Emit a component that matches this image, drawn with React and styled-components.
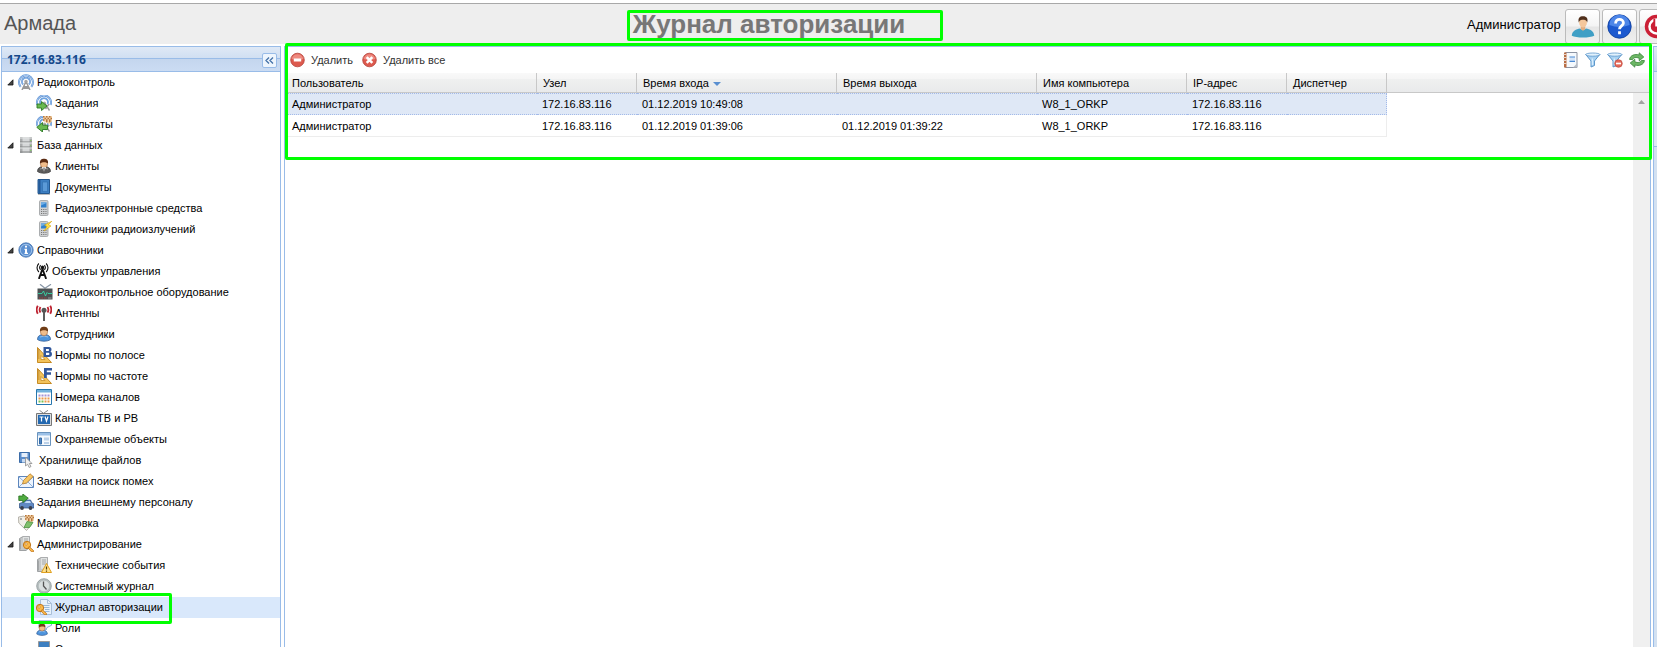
import React, { useState } from "react";
import styled, { createGlobalStyle, css } from "styled-components";

const GlobalStyle = createGlobalStyle`
  * { box-sizing: border-box; }
  html, body { margin: 0; padding: 0; }
  body {
    background: #fff;
    color: #000;
    font: 11px/20px "Liberation Sans", Arial, sans-serif;
    overflow: hidden;
  }
  button { font: inherit; color: inherit; padding: 0; border: 0; background: none; cursor: pointer; }
`;

const blue = "#99bce8";

/* ---------- layout ---------- */

const Page = styled.div`
  display: flex;
  flex-direction: column;
  height: 100vh;
  padding-top: 3px;
  overflow: hidden;
`;

const Header = styled.header`
  display: flex;
  align-items: center;
  flex: none;
  height: 41px;
  border-top: 1px solid #a8a8a8;
  background: #eee;
`;

const Brand = styled.div`
  flex: none;
  width: 73px;
  padding-left: 4px;
  padding-bottom: 2px;
  color: #555;
  font-size: 20px;
  white-space: nowrap;
`;

const TitleArea = styled.div`
  flex: 1;
  display: flex;
  justify-content: center;
`;

const Title = styled.h1`
  position: relative;
  margin: 0;
  color: #777;
  font-size: 26px;
  line-height: 30px;
  white-space: nowrap;
`;

const UserArea = styled.div`
  flex: none;
  display: flex;
  align-items: center;
  gap: 2px;
  width: 192px;
  align-self: stretch;
  padding-top: 5px;
  overflow: hidden;
`;

const UserName = styled.span`
  flex: none;
  width: 98px;
  padding: 0 0 4px 2px;
  font-size: 13px;
`;

const HeaderButton = styled.button`
  flex: none;
  display: grid;
  place-items: center;
  width: 35px;
  height: 35px;
  border: 1px solid #bbb;
  border-radius: 3px;
  background: linear-gradient(#fff, #f4f4f4 48%, #e6e6e6 52%, #efefef);
`;

const Workspace = styled.div`
  flex: 1;
  min-height: 0;
  display: flex;
  gap: 3px;
  padding: 2px 0 0 1px;
`;

const Sidebar = styled.nav`
  flex: none;
  width: 280px;
  border: 1px solid ${blue};
  border-bottom: 0;
`;

const SidebarHead = styled.div`
  display: flex;
  align-items: center;
  justify-content: space-between;
  height: 25px;
  padding: 2px 3px 0 5px;
  border-bottom: 1px solid ${blue};
  background: linear-gradient(#dfe9f6, #d0dff2 46%, ${blue} 46%, ${blue} 50%, #c4d6ee 50%, #cbdcf3);
  color: #15498b;
  font: bold 12px/22px "Noto Sans", sans-serif;
`;

const CollapseButton = styled.button`
  display: grid;
  place-items: center;
  width: 15px;
  height: 15px;
  border: 1px solid ${blue};
  border-radius: 2px;
  background: #eef5fd;
`;

const Main = styled.main`
  position: relative;
  flex: 1;
  min-width: 0;
  display: flex;
  flex-direction: column;
  border: 1px solid ${blue};
  border-bottom: 0;
`;

const EastPanel = styled.aside`
  flex: none;
  width: 4px;
  margin-left: -1px;
  border: 1px solid ${blue};
  border-width: 1px 0 0 1px;
  background: #d3e1f1;
`;

const EastSection = styled.div`
  height: ${(p) => p.$height}px;
  border-bottom: 1px solid ${blue};
  background: ${(p) => p.$fill};
`;

/* ---------- green call-outs ---------- */

const Callout = styled.span`
  position: absolute;
  z-index: 2;
  border: 3px solid #00ff00;
  border-radius: 2px;
  pointer-events: none;
  ${(p) => p.$area === "title" && css`inset: 1px -38px -2px -6px;`}
  ${(p) => p.$area === "grid" && css`top: -4px; left: 0; right: -2px; height: 117px;`}
  ${(p) => p.$area === "row" && css`top: -4px; left: 29px; width: 141px; height: 31px;`}
`;

/* ---------- tree ---------- */

const Tree = styled.ul`
  margin: 0;
  padding: 0;
  list-style: none;
`;

const Row = styled.li`
  position: relative;
  display: flex;
  align-items: flex-start;
  height: 21px;
  padding-left: ${(p) => (p.$level === 2 ? 34 : 0)}px;
  background: ${(p) => (p.$selected ? "#d9e8fb" : "transparent")};
`;

const Toggle = styled.button`
  flex: none;
  display: grid;
  place-items: center;
  width: 16px;
  height: 21px;
`;

const Spacer = styled.span`
  flex: none;
  width: 16px;
`;

const RowLink = styled.a`
  display: flex;
  align-items: center;
  gap: 3px;
  color: #000;
  text-decoration: none;
  white-space: nowrap;
`;

/* ---------- grid ---------- */

const Toolbar = styled.div`
  display: flex;
  align-items: center;
  justify-content: space-between;
  flex: none;
  height: 26px;
  padding: 0 5px;
`;

const ToolGroup = styled.div`
  display: flex;
  align-items: center;
  gap: ${(p) => p.$gap}px;
`;

const ToolButton = styled.button`
  display: flex;
  align-items: center;
  gap: 5px;
  color: #333;
`;

const Viewport = styled.div`
  flex: 1;
  min-height: 0;
  display: flex;
  align-items: stretch;
`;

const TableArea = styled.div`
  flex: 1;
  min-width: 0;
  overflow: hidden;
`;

const headFill = css`
  height: 20px;
  border-bottom: 1px solid #c8c8c8;
  background: linear-gradient(#f9f9f9, #f5f5f5 30%, #eff0f0 32%, #e9eaeb);
`;

const Table = styled.table`
  width: 100%;
  padding-left: 2px;
  table-layout: fixed;
  border-collapse: separate;
  border-spacing: 0;
`;

const HeadCell = styled.th`
  ${headFill}
  padding: 1px 6px 0;
  border-right: ${(p) => (p.$filler ? 0 : "1px solid #c8c8c8")};
  font-weight: normal;
  line-height: 18px;
  text-align: left;
  white-space: nowrap;
  &:first-child { padding-left: 5px; }
`;

const SortArrow = styled.svg`
  margin-left: 4px;
  vertical-align: middle;
`;

const Cell = styled.td`
  height: 22px;
  padding: 0 5px;
  line-height: 20px;
  border-bottom: 1px solid #ededed;
  white-space: nowrap;
  &:last-child { border-right: 1px solid #ededed; }
  ${(p) =>
    p.$selected &&
    css`
      border-top: 1px dotted #a3bae9;
      border-bottom: 1px dotted #a3bae9;
      background: #dfe8f6;
      &:last-child { border-right: 1px dotted #a3bae9; }
    `}
`;

const ScrollColumn = styled.div`
  flex: none;
  display: flex;
  flex-direction: column;
  width: 17px;
`;

const ScrollCap = styled.div`
  ${headFill}
`;

const ScrollTrack = styled.div`
  flex: 1;
  display: flex;
  justify-content: center;
  padding-top: 7px;
  background: #f0f0f0;
`;

/* ---------- icons ---------- */

const Radio = () => (
  <g fill="none">
    <path d="M2.700 12.800A7 7 0 1 1 13.300 12.800" stroke="#5b8fd2" strokeWidth="2" />
    <path d="M2.700 12.800A7 7 0 1 1 13.300 12.800" stroke="#b4d2f5" strokeWidth=".9" />
    <path d="M5 10.300A4 4 0 1 1 11 10.300" stroke="#5b8fd2" strokeWidth="1.800" />
    <path d="M5 10.300A4 4 0 1 1 11 10.300" stroke="#9cc4f0" strokeWidth=".7" />
    <circle cx="8" cy="7.500" r="1.700" fill="#a5a5a5" />
    <path d="M7.500 8.500 4 16M8.500 8.500l3.500 7.500M6 12.500l4.500 2M10 12.500l-4.500 2" stroke="#999" strokeWidth="1.500" />
  </g>
);
const Dish = () => (
  <g fill="none">
    <path d="M1.500 10A7 7 0 1 1 14.500 10" stroke="#5b8fd2" strokeWidth="2" />
    <path d="M1.500 10A7 7 0 1 1 14.500 10" stroke="#b4d2f5" strokeWidth=".9" />
    <path d="M4.500 9A4 4 0 1 1 11.500 9" stroke="#6fa4e0" strokeWidth="1.800" />
    <circle cx="8.500" cy="8" r="1.500" fill="#aaa" />
    <path d="m9 8.500 4.500 7M13 9l-3.500 5" stroke="#999" strokeWidth="1.400" />
  </g>
);
const Rack = () => (
  <g>
    <path d="M2 0h12v16H2z" fill="#a9abac" />
    <path d="M4.500 0h7v16h-7z" fill="#d5d7d8" />
    <path d="M2 5h12M2 10h12M2 15h12" stroke="#808384" />
    <path d="M2 1h12M2 6h12M2 11h12" stroke="#e3e5e5" />
    <path d="M12 3.500h1.500M12 8.500h1.500M12 13.500h1.500" stroke="#85c36c" />
  </g>
);
const Tower = () => (
  <g>
    <path d="M1.500 2.500 5 .5h6.500v11L8 14.500H1.500z" fill="#c6c8c9" stroke="#8d9092" strokeWidth=".8" />
    <path d="M5 .8h6.200v11H5z" fill="#e0e2e2" />
    <path d="M6 3h4M6 5h4M6 7h4" stroke="#a3a6a7" />
    <path d="M2.500 3.500v10" stroke="#a3a6a7" />
  </g>
);
const Person = ({ hair = "#703d17", body = "#4d94dd", edge = "#28518a" }) => (
  <g>
    <path d="M1.500 13.500c0-3.600 2.500-5 6.500-5s6.500 1.400 6.500 5c-3 2.300-10 2.300-13 0z" fill={body} stroke={edge} strokeWidth=".7" />
    <path d="M4 11q4-2 8 0" fill="none" stroke="#fff" strokeOpacity=".4" />
    <ellipse cx="8" cy="5.800" rx="3.600" ry="4" fill="#f0bd8b" stroke="#9e633a" strokeWidth=".6" />
    <path d="M4 5.600C3.600 1.800 5.500.7 8 .7s4.600 1.300 4 4.900C10.800 4 6.500 3.500 4 5.600z" fill={hair} />
  </g>
);
const Phone = () => (
  <g>
    <rect x="3.500" y=".5" width="8.500" height="15" rx="1.200" fill="#d0d2d4" stroke="#9a9da0" strokeWidth=".8" />
    <path d="M5 2.500h5.500v5H5z" fill="#2f80cd" />
    <path d="M5 5.500 10.500 3V2.500H5z" fill="#6eaee6" />
    <path d="M5 9.500h5.500M5 11.500h5.500M5 13.500h5.500" stroke="#777" strokeDasharray="1.200 1" />
  </g>
);
const Ruler = ({ letter }) => (
  <g>
    <path d="M1.500.500v15H15.500z" fill="#f2c25b" stroke="#c78b23" />
    <path d="M5 8.500v4h4z" fill="#fff" stroke="#c78b23" strokeWidth=".8" />
    <path d="M2 3h1.500M2 5h1.500M2 7h1.500M2 9h1.500M2 11h1.500" stroke="#9b6514" strokeWidth=".7" />
    {letter === "B" ? (
      <path d="M7.500 0H13q2.500 0 2.500 2.500 0 1.300-1 2 1.500.6 1.500 2.500 0 3-3 3H7.500zm2.500 2v2h2.200q.9 0 .9-1t-.9-1zm0 3.800V8h2.400q1 0 1-1.100t-1-1.100z" fill="#31579c" fillRule="evenodd" />
    ) : (
      <path d="M8 0h8v2.500H10.800v1.700H15v2.500h-4.200V10H8z" fill="#31579c" />
    )}
  </g>
);
const Arrow = ({ back }) => (
  <path
    d={back ? "M6.500 6.500v2.700h5v4.300h-5V16L.8 11.300z" : "M1 9h4.500V6.500L11 11 5.500 15.500V13H1z"}
    fill="#6ab950"
    stroke="#2b7a25"
    strokeWidth=".9"
  />
);
const Key = () => (
  <g>
    <circle cx="4.500" cy="9" r="3.700" fill="#fbb94a" stroke="#bb6f14" strokeWidth=".9" />
    <path d="m6.500 10.500 4.500 4v1.300H9L5.500 12z" fill="#fbb94a" stroke="#bb6f14" strokeWidth=".8" />
    <circle cx="3.600" cy="8" r="1.100" fill="#fff" stroke="#bb6f14" strokeWidth=".6" />
  </g>
);
const Checker = () => (
  <g>
    <path d="M7 0h9v5.500l-3 2.500-6-3z" fill="#f3d2a6" />
    <path d="M7 .8h9M8.500 2.400h7.500M7 4h9M10 5.600h5" stroke="#b4733b" strokeDasharray="1.500 1.500" strokeWidth="1.500" />
  </g>
);
const Red = ({ children }) => (
  <g>
    <circle cx="7.500" cy="8" r="6.800" fill="#dd5a4e" stroke="#b5433b" strokeWidth=".8" />
    <path d="M1.700 7A5.900 5.900 0 0 1 13.300 7Q7.500 9 1.700 7z" fill="#ee8a80" />
    {children}
  </g>
);
const Funnel = () => (
  <g>
    <path d="M.8 2.500 6 9v6l3.500-1.500V9l5.200-6.500z" fill="#a9d2f2" stroke="#5d97cb" />
    <ellipse cx="7.800" cy="2.600" rx="7.200" ry="1.600" fill="#e1f1fc" stroke="#5d97cb" strokeWidth=".8" />
    <path d="M7.300 6.500v6.500" stroke="#e6f5ff" />
  </g>
);

const drawings = {
  radio: <Radio />,
  task: <><Dish /><Arrow /></>,
  result: <><Dish /><Checker /><Arrow back /></>,
  database: <Rack />,
  client: (
    <>
      <Person hair="#5b2c13" body="#5c5c5c" edge="#333" />
      <path d="m6 9 2 5.500L10 9z" fill="#fff" />
      <path d="M8 9.500v4.500" stroke="#333" />
    </>
  ),
  book: (
    <>
      <path d="M2 .5h11.500v14H2z" fill="#3d7fc2" stroke="#24588f" />
      <path d="M2.500 1h2v13h-2z" fill="#245b98" />
      <path d="M6.500 3h5v9.500h-5z" fill="#5b9ad7" stroke="#2e6bab" strokeWidth=".6" />
      <path d="M2 15.500h12" stroke="#bbb" />
    </>
  ),
  phone: <Phone />,
  source: <><Phone /><path d="M15.800.2 8.500 4l2.500 1.500-3 4.500 7-5-2.500-1.300z" fill="#ffe14a" stroke="#d3a310" strokeWidth=".6" /></>,
  info: (
    <>
      <circle cx="8" cy="8" r="7.200" fill="#5b8fd0" stroke="#4573af" strokeWidth=".8" />
      <circle cx="8" cy="8" r="5.700" fill="none" stroke="#b3d0f0" strokeWidth=".8" />
      <path d="M7 3.700h2v1.800H7zM6.500 6.800H9v4h1V12H6.500v-1.200H7V8h-.5z" fill="#fff" />
    </>
  ),
  tower: (
    <g fill="none" stroke="#111" strokeWidth="1.400">
      <path d="M3.500.5Q-1 4.500 3.500 9M12.500.5q4.500 4 0 8.500M5.700 2.200q-2.500 2.300 0 4.600M10.300 2.200q2.500 2.300 0 4.600" />
      <circle cx="8" cy="4.500" r="1.300" fill="#111" />
      <path d="M3.500 16 7.500 7h1l4 9M5.500 12h5" strokeWidth="2.200" />
    </g>
  ),
  monitor: (
    <>
      <path d="m3 .3 5 4 6-4" fill="none" stroke="#8896a6" strokeWidth="1.300" />
      <path d="M.5 4.500h15v11H.5z" fill="#4b5153" />
      <path d="M1 9.500h4l1.500-2.500L8.500 12l1.500-3.500 1 1h4.500" fill="none" stroke="#38d5a5" strokeWidth=".9" />
      <path d="M2 14h8" stroke="#b23c38" strokeDasharray="1.500 1" />
      <path d="M11 14h3.500" stroke="#999" />
    </>
  ),
  antenna: (
    <g fill="none">
      <path d="M1.800.800q-2.300 4 0 8M4.500 2q-1.800 2.800 0 5.600M14.200.8q2.300 4 0 8M11.500 2q1.800 2.800 0 5.600" stroke="#bd2331" strokeWidth="1.800" />
      <circle cx="8" cy="5.200" r="2.500" fill="#555" />
      <path d="M8 5v11" stroke="#555" strokeWidth="1.900" />
    </g>
  ),
  employee: <Person />,
  normB: <Ruler letter="B" />,
  normF: <Ruler letter="F" />,
  channels: (
    <>
      <path d="M.5.500h15v15H.5z" fill="#fff" stroke="#2777ae" />
      <path d="M1 1h14v2.500H1z" fill="#72b1dc" />
      <path d="M2.500 6.500h11.500" stroke="#a593d6" strokeWidth="2" strokeDasharray="2 1" />
      <path d="M2.500 9.500h11.500" stroke="#eb9a4b" strokeWidth="2" strokeDasharray="2 1" />
      <path d="M2.500 12.500h6" stroke="#7bc153" strokeWidth="2" strokeDasharray="2 1" />
      <path d="M8.500 12.500h5.500" stroke="#eb9a4b" strokeWidth="2" strokeDasharray="2 1" />
    </>
  ),
  tv: (
    <>
      <path d="m3.500.3 4 3 4.500-3" fill="none" stroke="#888" />
      <path d="M.5 3.500h15v12H.5z" fill="#ddd" stroke="#777" />
      <path d="M2 5h12v9H2z" fill="#2368b0" />
      <path d="M3.500 7h4M5.500 7v4.500M9 6.500l1.500 4.500L12 6.500" fill="none" stroke="#fff" strokeWidth="1.200" />
    </>
  ),
  protect: (
    <>
      <path d="M1.500 1.500h13v13h-13z" fill="#f5f9fd" stroke="#6993bd" />
      <path d="M2 2h12v2.500H2z" fill="#9cc1e7" />
      <path d="M3.500 7h2v6h-2z" fill="#4f86c3" stroke="#356ba6" />
      <path d="M8 6.500h5v3H8zM8 11h5v2H8z" fill="#bcd1e8" />
    </>
  ),
  storage: (
    <>
      <path d="M.5.500h10v10H.5z" fill="#5b8dcb" stroke="#3b6ca8" />
      <path d="M2.500 1h6v4h-6z" fill="#e4eefb" />
      <path d="M3 7h5v3.500H3z" fill="#c7daf2" />
      <path d="m6.500 5 6.500 6.500h-2.700l1.700 3-1.800 1-1.600-3.200-2.100 1.700z" fill="#f1f1f1" stroke="#8b8b8b" strokeWidth=".8" />
    </>
  ),
  request: (
    <>
      <path d="M.5 3.500h15v11H.5z" fill="#edf4fd" stroke="#5d86bd" />
      <path d="m1 4 7 6.500L15 4M1 14l5-5M15 14l-5-5" fill="none" stroke="#8cafd9" />
      <path d="m4.500 11 1-3.500L12 .8l3.200 2.700L8.500 10z" fill="#f7c563" stroke="#b57b28" strokeWidth=".8" />
    </>
  ),
  car: (
    <>
      <path d="M1.500 13V9.500l4-1.500L8 6h4.500l1.500 3 2 1v4H1.500z" fill="#6189c3" stroke="#2b4e80" strokeWidth=".7" />
      <path d="M8.500 7h3.500l1 2H6.500z" fill="#c3dcf6" />
      <circle cx="4" cy="14" r="1.900" fill="#3a3f4c" />
      <circle cx="12.500" cy="14" r="1.900" fill="#3a3f4c" />
      <path d="M.8 2h4V0l5.500 4.200L4.800 8.500V6.500h-4z" fill="#4fac40" stroke="#246e1c" strokeWidth=".8" />
    </>
  ),
  mark: (
    <>
      <path d="M.5 2 6 1l7.500 8.500-5 6L.8 8z" fill="#f0eee7" stroke="#b5b2aa" />
      <circle cx="3" cy="4" r="1" fill="#999" />
      <Checker />
      <path d="m6 12.500 3-6 6 1-3.500 5z" fill="#7fbf6c" stroke="#3f8a35" strokeWidth=".7" />
    </>
  ),
  admin: <><Tower /><g transform="translate(4.500 0)"><Key /></g></>,
  events: (
    <>
      <Tower />
      <path d="m10.500 6.500 5 9h-10z" fill="#ffe08a" stroke="#e0a020" strokeLinejoin="round" />
      <path d="M10.500 9.500v3M10.500 13.500v1.200" stroke="#543a00" strokeWidth="1.200" />
    </>
  ),
  clock: (
    <>
      <circle cx="8" cy="8" r="7.300" fill="#b9c1c2" stroke="#8d9799" strokeWidth=".8" />
      <circle cx="8" cy="8" r="5.700" fill="#d9dfdf" stroke="#aab1b2" strokeWidth=".6" />
      <path d="M7.500 3.500V8l3 3.500" fill="none" stroke="#555" strokeWidth="1.300" />
    </>
  ),
  authlog: (
    <>
      <path d="M4.500.500h7l4 4v11h-11z" fill="#e7f1fb" stroke="#a9bfd8" />
      <path d="M11.500.500v4h4" fill="none" stroke="#a9bfd8" />
      <path d="M7 6.500h6.500M7 8.500h6.500M9 10.500h4.500M9 12.500h4.500" stroke="#9bbad9" />
      <g transform="translate(-.5 0)"><Key /></g>
    </>
  ),
  roles: (
    <>
      <path d="M3 .8h12.500v4.500L11 7.500 10 10 8.500 7.500 3 6z" fill="#eef5fd" stroke="#7da3d0" strokeWidth=".9" />
      <g transform="translate(-.5 3) scale(.82)"><Person /></g>
    </>
  ),
  session: (
    <>
      <path d="M2.500.500h11v9.500h-11z" fill="#3d7fc0" stroke="#999" />
      <path d="M7 10.500h2v3H7zM4 14h8" stroke="#888" />
    </>
  ),
  remove: <Red><path d="M3.800 6.500h7.400v3H3.800z" fill="#fff" /></Red>,
  removeAll: <Red><path d="m4.700 5.200 5.600 5.600M10.300 5.200 4.700 10.800" stroke="#fff" strokeWidth="2.600" /></Red>,
  notes: (
    <>
      <path d="M2.500.500h11.500v15H2.500z" fill="#f5f9fd" stroke="#8c93a3" />
      <path d="M1 .500h2.500v15H1z" fill="#b96d44" />
      <path d="M.5 2.500h3M.5 5.500h3M.5 8.500h3M.5 11.500h3" stroke="#e7d5ca" />
      <path d="M6.500 5h5.500v4.500H6.500z" fill="#d6e6f9" />
      <path d="M6.500 5h5.500M6.500 9.300h5.500" stroke="#4c8bd5" strokeWidth="1.200" />
      <path d="M14 11.500v4h-4z" fill="#b6bcc5" />
    </>
  ),
  filter: <Funnel />,
  filterOff: (
    <>
      <Funnel />
      <circle cx="11.500" cy="11.500" r="3.800" fill="#e3685a" stroke="#bf4b40" strokeWidth=".7" />
      <path d="M9 11.500h5" stroke="#fff" strokeWidth="1.700" />
    </>
  ),
  refresh: (
    <g fill="#6db765" stroke="#3a853b" strokeWidth=".8" strokeLinejoin="round">
      <path d="M.6 7.500C.8 3.500 6 1.500 10.200 3V.8L14.800 5 10.200 8.700V6.200C7 4.800 4.500 5.500 3.600 7.500z" />
      <path d="M15.400 8.500c-.2 4-5.400 6-9.600 4.500v2.200L1.200 11l4.600-3.700v2.500c3.200 1.400 5.700.7 6.600-1.300z" />
    </g>
  ),
  user: (
    <>
      <path d="M.5 13.800C.8 10.500 3.500 9.500 6 9l2 1.200L10 9c2.500.5 5.200 1.500 5.500 4.800-3 1.600-12 1.600-15 0z" fill="#3f9fc5" />
      <path d="M6.500 7.500h3v2L8 10.500l-1.500-1z" fill="#e2ae80" />
      <ellipse cx="8" cy="5" rx="2.600" ry="3.400" fill="#f4c79c" />
      <path d="M5.200 5C4.500 1.800 5.800.9 8 .8s3.600 1.300 2.800 4.200C10.300 3.400 9.500 3 8 3.200 6.500 3 5.700 3.400 5.200 5z" fill="#50301c" />
    </>
  ),
  help: (
    <>
      <circle cx="8" cy="8" r="7.500" fill="#1c59cf" stroke="#0c3b98" strokeWidth=".5" />
      <path d="M1.500 7a6.500 6.500 0 0 1 13 0Q8 9.500 1.500 7z" fill="#4d86e8" />
      <path d="M5.500 6C5.500 2.500 10.500 2.700 10.500 5.700 10.500 7.500 8 7.700 8 9.700M8 11v2" fill="none" stroke="#fff" strokeWidth="1.800" />
    </>
  ),
  exit: (
    <>
      <circle cx="8" cy="8" r="7.500" fill="#cb1f35" />
      <circle cx="8" cy="8" r="4.500" fill="none" stroke="#fff" strokeWidth="1.600" />
      <path d="M8 3v5" stroke="#cb1f35" strokeWidth="4" />
      <path d="M8 3v5" stroke="#fff" strokeWidth="1.600" />
    </>
  ),
};

const IconSvg = styled.svg`
  flex: none;
  display: block;
`;

const Icon = ({ name, width = 16, size = 16 }) => (
  <IconSvg width={size === 16 ? width : size} height={size} viewBox="0 0 16 16" preserveAspectRatio={width < 16 ? "none" : "xMidYMid meet"} aria-hidden="true">
    {drawings[name]}
  </IconSvg>
);

/* ---------- data ---------- */

const groups = [
  { label: "Радиоконтроль", icon: "radio", items: [["Задания", "task"], ["Результаты", "result"]] },
  {
    label: "База данных",
    icon: "database",
    items: [["Клиенты", "client"], ["Документы", "book"], ["Радиоэлектронные средства", "phone"], ["Источники радиоизлучений", "source"]],
  },
  {
    label: "Справочники",
    icon: "info",
    items: [
      ["Объекты управления", "tower", 13],
      ["Радиоконтрольное оборудование", "monitor", 18],
      ["Антенны", "antenna"],
      ["Сотрудники", "employee"],
      ["Нормы по полосе", "normB"],
      ["Нормы по частоте", "normF"],
      ["Номера каналов", "channels"],
      ["Каналы ТВ и РВ", "tv"],
      ["Охраняемые объекты", "protect"],
    ],
  },
  { label: "Хранилище файлов", icon: "storage", width: 18 },
  { label: "Заявки на поиск помех", icon: "request" },
  { label: "Задания внешнему персоналу", icon: "car" },
  { label: "Маркировка", icon: "mark" },
  {
    label: "Администрирование",
    icon: "admin",
    items: [
      ["Технические события", "events"],
      ["Системный журнал", "clock"],
      ["Журнал авторизации", "authlog"],
      ["Роли", "roles"],
      ["Сессии", "session"],
    ],
  },
];

const columns = [
  ["Пользователь", 250],
  ["Узел", 100],
  ["Время входа", 200, true],
  ["Время выхода", 200],
  ["Имя компьютера", 150],
  ["IP-адрес", 100],
  ["Диспетчер", 100],
];

const records = [
  ["Администратор", "172.16.83.116", "01.12.2019 10:49:08", "", "W8_1_ORKP", "172.16.83.116", ""],
  ["Администратор", "172.16.83.116", "01.12.2019 01:39:06", "01.12.2019 01:39:22", "W8_1_ORKP", "172.16.83.116", ""],
];

const current = "Журнал авторизации";

function TreeItem({ label, icon, width, level, children }) {
  const selected = label === current;
  return (
    <Row $level={level} $selected={selected}>
      {children}
      <RowLink href="#" aria-current={selected ? "page" : undefined}>
        <Icon name={icon} width={width} />
        {label}
      </RowLink>
      {selected && <Callout $area="row" />}
    </Row>
  );
}

function TreeGroup({ group }) {
  const [open, setOpen] = useState(true);
  return (
    <>
      <TreeItem {...group} level={1}>
        {group.items ? (
          <Toggle aria-label={group.label} aria-expanded={open} onClick={() => setOpen(!open)}>
            <svg width="7" height="7" viewBox="0 0 7 7" aria-hidden="true">
              <path d={open ? "M6 .8V6H.8z" : "M1 0v7l4-3.500z"} fill="#444" stroke="#111" strokeWidth=".8" />
            </svg>
          </Toggle>
        ) : (
          <Spacer />
        )}
      </TreeItem>
      {open &&
        group.items?.map(([label, icon, width]) => (
          <TreeItem key={label} label={label} icon={icon} width={width} level={2} />
        ))}
    </>
  );
}

export default function App() {
  return (
    <Page>
      <GlobalStyle />
      <Header>
        <Brand>Армада</Brand>
        <TitleArea>
          <Title>
            Журнал авторизации
            <Callout $area="title" />
          </Title>
        </TitleArea>
        <UserArea>
          <UserName>Администратор</UserName>
          <HeaderButton aria-label="Профиль"><Icon name="user" size={24} /></HeaderButton>
          <HeaderButton aria-label="Справка"><Icon name="help" size={25} /></HeaderButton>
          <HeaderButton aria-label="Выход"><Icon name="exit" size={25} /></HeaderButton>
        </UserArea>
      </Header>
      <Workspace>
        <Sidebar>
          <SidebarHead>
            172.16.83.116
            <CollapseButton aria-label="Свернуть">
              <svg width="9" height="7" viewBox="0 0 9 7" aria-hidden="true">
                <path d="M4 .5 1 3.500l3 3M8 .5l-3 3 3 3" fill="none" stroke="#4371a8" strokeWidth="1.300" />
              </svg>
            </CollapseButton>
          </SidebarHead>
          <Tree>
            {groups.map((group) => (
              <TreeGroup key={group.label} group={group} />
            ))}
          </Tree>
        </Sidebar>
        <Main>
          <Toolbar>
            <ToolGroup $gap={9}>
              <ToolButton><Icon name="remove" />Удалить</ToolButton>
              <ToolButton><Icon name="removeAll" />Удалить все</ToolButton>
            </ToolGroup>
            <ToolGroup $gap={6}>
              <ToolButton aria-label="Журнал"><Icon name="notes" /></ToolButton>
              <ToolButton aria-label="Фильтр"><Icon name="filter" /></ToolButton>
              <ToolButton aria-label="Сбросить фильтр"><Icon name="filterOff" /></ToolButton>
              <ToolButton aria-label="Обновить"><Icon name="refresh" /></ToolButton>
            </ToolGroup>
          </Toolbar>
          <Viewport>
            <TableArea>
              <Table>
                <colgroup>
                  {columns.map(([label, width]) => (
                    <col key={label} width={width} />
                  ))}
                  <col />
                </colgroup>
                <thead>
                  <tr>
                    {columns.map(([label, , sorted]) => (
                      <HeadCell key={label} scope="col" aria-sort={sorted ? "descending" : undefined}>
                        {label}
                        {sorted && (
                          <SortArrow width="8" height="4" viewBox="0 0 8 4" aria-hidden="true">
                            <path d="M0 0h8L4 4z" fill="#5a8fd0" />
                          </SortArrow>
                        )}
                      </HeadCell>
                    ))}
                    <HeadCell as="td" $filler />
                  </tr>
                </thead>
                <tbody>
                  {records.map((record, r) => (
                    <tr key={r}>
                      {record.map((value, c) => (
                        <Cell key={c} $selected={r === 0}>{value}</Cell>
                      ))}
                    </tr>
                  ))}
                </tbody>
              </Table>
            </TableArea>
            <ScrollColumn>
              <ScrollCap />
              <ScrollTrack>
                <svg width="7" height="4" viewBox="0 0 7 4" aria-hidden="true">
                  <path d="M0 4h7L3.500 0z" fill="#a3a3a3" />
                </svg>
              </ScrollTrack>
            </ScrollColumn>
          </Viewport>
          <Callout $area="grid" />
        </Main>
        <EastPanel>
          <EastSection $height={25} $fill="linear-gradient(#dfe9f6, #c4d6ee)" />
          <EastSection $height={75} $fill="#dfe9f6" />
        </EastPanel>
      </Workspace>
    </Page>
  );
}
